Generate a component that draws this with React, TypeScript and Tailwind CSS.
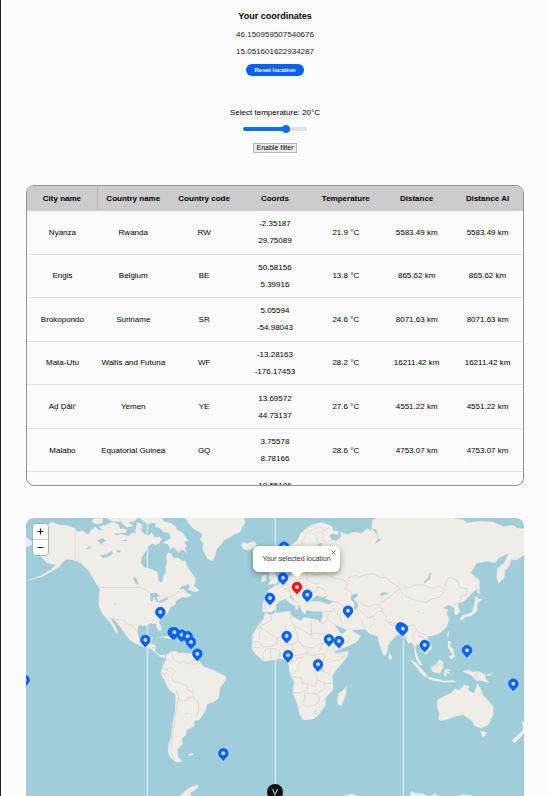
import { useState } from "react";

type City = {
  name: string;
  country: string;
  code: string;
  coords: [string, string];
  temperature: string;
  distance: string;
};

const cities: City[] = [
  { name: "Nyanza", country: "Rwanda", code: "RW", coords: ["-2.35187", "29.75089"], temperature: "21.9 °C", distance: "5583.49 km" },
  { name: "Engis", country: "Belgium", code: "BE", coords: ["50.58156", "5.39916"], temperature: "13.8 °C", distance: "865.62 km" },
  { name: "Brokopondo", country: "Suriname", code: "SR", coords: ["5.05594", "-54.98043"], temperature: "24.6 °C", distance: "8071.63 km" },
  { name: "Mata-Utu", country: "Wallis and Futuna", code: "WF", coords: ["-13.28163", "-176.17453"], temperature: "28.2 °C", distance: "16211.42 km" },
  { name: "Aḑ Ḑāli‘", country: "Yemen", code: "YE", coords: ["13.69572", "44.73137"], temperature: "27.6 °C", distance: "4551.22 km" },
  { name: "Malabo", country: "Equatorial Guinea", code: "GQ", coords: ["3.75578", "8.78166"], temperature: "28.6 °C", distance: "4753.07 km" },
  { name: "", country: "", code: "", coords: ["19.55186", ""], temperature: "", distance: "" },
];

const columns = ["City name", "Country name", "Country code", "Coords", "Temperature", "Distance", "Distance AI"];

const pins: [number, number][] = [
  [792, 110], [789, 203], [750, 264], [862, 254], [984, 302], [800, 378], [804, 436], [927, 388], [957, 393],
  [421, 306], [376, 390], [458, 367], [463, 367], [485, 374], [503, 379], [513, 396], [532, 431],
  [1142, 352], [1149, 356], [1214, 405], [1341, 421], [1480, 521], [894, 463], [610, 730], [14, 510],
];

const land = [
  // North and Central America
  "M85 45 95 35 103 40 120 45 140 46 165 55 172 66 185 62 205 74 212 62 225 50 240 62 252 57 262 64 280 65 290 78 300 72 325 78 338 68 345 72 350 45 362 58 370 70 385 78 395 68 405 85 420 80 425 90 415 100 398 98 385 110 380 120 365 140 362 160 375 174 395 178 412 187 416 213 422 218 429 213 430 198 438 187 437 170 442 155 438 140 445 128 455 133 460 145 475 143 485 153 495 152 500 166 512 185 527 207 526 218 505 224 485 228 476 240 492 236 500 248 515 256 502 262 485 262 468 273 465 284 450 292 444 308 425 322 416 335 425 358 420 364 412 356 408 342 390 339 378 347 355 345 352 365 357 386 372 395 383 388 398 383 392 400 408 408 405 425 420 435 436 436 434 444 420 440 408 430 395 418 375 412 350 402 330 390 318 375 300 350 285 330 272 324 280 340 290 358 295 374 285 364 276 345 266 332 250 315 240 298 236 280 237 260 240 238 225 215 215 198 205 180 195 172 180 158 160 150 140 148 128 156 118 170 95 184 70 198 22 212 60 198 92 180 108 164 80 158 72 148 58 136 65 120 58 100 62 80Z",
  "M18 82 36 95 34 106 18 112Z",
  // Arctic islands
  "M225 24 250 26 245 40 228 42 215 34ZM238 50 260 44 278 36 296 44 300 56 320 58 318 68 290 70 270 64 250 62ZM262 24H295L310 32 292 36 272 32ZM300 24H352L344 34 325 36 340 48 322 52 308 42ZM350 36 368 44 366 56 352 50ZM362 24H392L400 36 385 42 368 34Z",
  "M388 24H425L432 35 450 38 468 50 472 62 486 66 505 92 492 96 500 108 494 114 500 128 484 118 476 128 462 112 450 118 444 102 428 98 440 92 454 84 446 68 430 66 420 55 405 50 410 40 395 38ZM395 85 410 82 420 98 406 106 396 98Z",
  "M514 206 526 218 520 228 538 240 528 246 506 240Z",
  // Greenland
  "M496 24H672L675 38 668 50 660 66 640 74 630 82 615 88 602 104 590 118 586 136 578 153 562 146 554 130 548 118 550 100 541 88 548 74 538 66 520 56 508 42Z",
  // Iceland, Britain, Ireland
  "M663 104 672 96 680 101 702 94 710 103 704 112 686 121 670 118ZM746 165 758 168 757 180 767 196 776 208 770 220 744 224 752 212 746 200 750 190 740 178ZM726 196 740 194 738 212 724 216Z",
  // Europe and Asia
  "M822 185 818 170 812 160 808 110 820 100 832 92 842 70 858 56 875 44 902 38 920 42 936 50 940 62 955 64 953 74 935 70 928 78 935 90 950 92 964 80 960 66 984 74 1000 66 1024 70 1042 56 1054 62 1058 30 1068 24 1300 24 1330 30 1340 38 1380 34 1420 36 1450 50 1480 46 1490 54 1512 56 1512 134 1490 150 1474 148 1465 172 1455 180 1452 204 1436 220 1430 202 1432 176 1452 160 1466 130 1448 138 1436 144 1426 158 1400 154 1370 160 1352 188 1362 196 1372 212 1370 236 1350 256 1330 275 1312 280 1320 304 1308 316 1302 306 1304 294 1286 285 1268 294 1284 300 1280 312 1288 328 1280 350 1262 368 1236 378 1222 378 1224 394 1236 414 1216 434 1204 418 1194 402 1186 406 1188 426 1196 446 1207 466 1198 464 1186 440 1182 408 1172 396 1166 402 1156 380 1148 368 1130 376 1112 394 1104 406 1102 428 1092 438 1080 408 1072 378 1050 372 1036 358 980 360 950 346 940 340 964 372 976 366 986 356 1002 366 1022 378 1010 396 980 410 938 426 926 404 908 370 900 344 908 316 906 304 880 304 850 299 844 286 856 277 896 274 928 284 940 274 915 266 924 256 906 262 890 256 870 274 866 286 850 288 858 300 856 314 846 304 836 280 820 266 812 254 808 262 824 272 842 286 834 286 834 300 826 296 826 288 808 278 796 266 778 274 768 286 768 296 752 306 728 306 728 284 732 270 754 266 760 252 742 244 758 232 778 222 790 208 810 200Z",
  // Africa
  "M735 310 752 314 775 308 810 304 814 318 842 332 852 322 895 330 904 350 920 378 934 410 945 430 985 424 982 438 968 458 950 478 936 500 940 538 914 566 917 585 898 612 882 626 850 630 840 616 832 580 818 550 823 516 810 492 804 452 780 446 732 454 708 434 696 416 696 398 698 374 716 344 730 328Z",
  "M980 528 978 550 965 586 954 584 952 570 956 550 970 540Z",
  // South America
  "M438 448 438 436 455 425 470 423 476 430 490 428 520 432 535 450 552 470 584 482 615 498 618 508 600 534 596 564 580 576 562 582 556 604 538 630 522 632 523 648 500 660 498 674 485 686 488 702 472 718 474 738 486 756 466 756 452 742 444 726 446 704 454 680 458 640 466 602 467 554 445 536 432 508 422 492 428 470Z",
  "M418 382 440 378 462 386 450 388 430 382ZM506 733 520 730 518 735 507 736Z",
  // Asian islands
  "M1365 258 1376 266 1386 268 1372 280 1371 302 1354 318 1338 320 1324 332 1320 326 1328 316 1342 312 1356 306 1362 288 1366 272ZM1370 200 1378 212 1378 240 1380 252 1372 248ZM1281 374 1288 362 1284 382ZM1284 394 1292 394 1290 410 1300 416 1304 440 1294 446 1286 440 1298 434 1284 414ZM1108 428 1116 440 1112 450 1106 444Z",
  "M1172 450 1188 458 1204 476 1220 494 1216 502 1204 490 1184 466ZM1218 500 1240 504 1270 512 1300 511 1306 516 1270 517 1230 509ZM1232 470 1248 464 1258 450 1268 454 1270 470 1260 490 1238 486ZM1276 478 1290 480 1282 484 1292 492 1280 488 1278 500 1272 496ZM1328 484 1346 480 1358 486 1376 484 1396 494 1396 506 1408 518 1384 512 1368 512 1354 496ZM1400 494 1420 490 1404 498Z",
  // Australia, Tasmania and New Zealand
  "M1252 570 1270 560 1295 548 1305 536 1318 542 1332 525 1348 528 1344 540 1362 550 1372 522 1380 532 1388 554 1400 566 1420 590 1420 612 1404 646 1384 654 1364 648 1358 634 1344 624 1330 614 1302 620 1282 628 1262 632 1256 628 1258 610 1252 590ZM1382 664 1400 666 1396 678 1386 680ZM1505 634 1512 638V668L1500 684 1484 699 1476 692 1490 678 1506 664 1510 654Z",
  // Antarctica
  "M482 858 494 844 510 832 534 824 532 834 510 850 514 858ZM974 858 995 851 1012 858ZM1170 858 1174 844 1186 850 1215 852 1222 858ZM1234 856 1245 851 1256 858ZM1318 858 1330 853 1360 858Z",
];

const water =
  "M866 168 878 158 884 126 895 102 908 98 904 108 890 128 892 148 920 148 894 156 884 178 862 188 846 184ZM994 256 1010 248 1014 258 1002 266 1014 284 1012 298 1000 296 1004 280 992 268ZM1052 54 1070 60 1072 84 1084 90 1064 102 1076 84 1062 62ZM1210 216 1222 206 1230 188 1234 190 1230 206 1216 218ZM1080 252 1092 246 1106 250 1092 254 1084 258ZM232 92 250 84 258 92 246 98 248 106ZM240 136 258 134 275 124 280 130 262 140 248 144ZM286 120 304 122 296 128ZM338 200 348 204 356 224 346 220ZM390 250 408 248 420 258 410 262 416 276 408 274 402 260 396 276 392 272ZM412 276 432 268 440 262 444 268 424 278ZM902 474 912 476 906 484 900 480ZM196 116 212 108 210 116ZM282 278 288 282 284 284ZM300 92 322 88 318 94ZM496 610 504 608 502 612ZM1190 304 1198 302 1194 306Z";

const borders =
  "M165 55V148L180 156 192 172 205 184 212 198M240 232H360L380 240 392 250M412 276 430 268 444 262 452 260 464 256 472 244 480 246M268 325 290 328 310 330 322 344 336 346 350 362M376 404 386 410 390 400M396 414 408 412M455 430 460 448 476 458 490 454 505 460 520 452 525 434M428 474 440 480 450 470 466 486 455 500 462 516 484 518 500 528 502 540 518 546 522 566 536 578 536 600 530 618M467 540 476 560 470 590 466 620 462 650 456 690 454 730 464 748M476 572 500 572 506 560 520 562M422 492 436 492 444 476M536 448 530 462 512 462M548 452 544 464" +
  "M832 160 838 130 846 96 864 66 888 54 904 52 912 62 924 54M904 60 912 88 914 102M888 76 894 98M920 110 918 146 924 160 936 170 940 190 930 196 944 206 972 210 984 220 974 236M870 190 890 196 912 190 926 196M864 190 860 206 872 218 894 222 902 214M802 206 800 222 812 234 830 236 850 230 864 224M778 226 790 234 804 242 816 242M736 272 736 300M756 266 776 276M850 230 852 244 870 248 886 246 892 230 912 238 918 252M846 262 862 270 880 266M940 274 960 280 980 296M936 282 944 304 958 320 966 340M908 306 930 304 944 306M930 304 920 324 940 344M904 344 920 330M982 376 990 388 970 400 942 408M974 236 988 240 996 252M990 216 984 204 1006 196 1020 202 1030 196 1062 190 1080 204 1098 202 1112 216 1134 230 1140 236 1124 246 1110 262 1094 270 1082 284 1066 282 1050 290 1032 286 1010 268M1140 236 1166 234 1178 226 1208 224 1232 234 1260 230 1276 240 1258 262 1236 266 1218 278 1196 274 1174 266 1150 256ZM1276 232 1280 210 1290 202 1312 212 1320 232 1342 236 1338 256 1322 258 1324 268M1308 284 1320 270M1014 296 1030 312 1044 324 1060 318 1074 304 1088 306 1086 294 1070 290M1024 326 1028 348 1036 358M1060 318 1064 336 1046 356M1088 306 1098 318 1096 332 1118 346 1138 348M1104 336 1126 340 1140 344M1152 342 1152 356 1168 348 1180 344 1190 360 1176 376 1184 394M1192 364 1206 372 1220 374M1194 378 1210 382 1218 394M1202 400 1216 400M1234 472 1254 466 1268 452M1368 486V512" +
  "M752 314 754 330 718 350M718 350 772 384 800 376 826 360 820 342 810 330 814 318M826 350 880 378M874 330V370H920M872 370V386M772 384 770 404 742 410 726 410 716 394 698 396M698 412H716M718 350V390M732 454 728 434 736 418 752 416 768 416 780 426 778 446M752 416 752 448M766 420 768 446M780 408 820 404 834 392 830 366M820 404 818 430 804 440M834 392 850 410 880 414 894 402 914 398M820 438 850 430 880 436 914 430M860 430 858 412M896 426 910 398 928 402 938 412 948 426 976 436 958 450 936 452M914 430 912 452 906 470M806 454 826 454 832 444 850 440M812 496 832 480 840 456M818 500 846 504 848 522 862 520 862 540 840 548 818 548M862 520 884 530 892 510 888 484 898 460M892 510 914 520 936 520M912 520 914 536 890 552 870 550 854 550 852 580 840 594M884 550 900 564 892 582 868 590 852 588M890 600 880 612 M934 500 920 488 902 482M886 602 892 608 884 612Z";

function Pin({ x, y, color }: { x: number; y: number; color: string }) {
  return (
    <g transform={`translate(${x} ${y})`}>
      <path d="M0 22C-5 15-15 10-15 0A15 15 0 0 1 15 0C15 10 5 15 0 22Z" fill={color} stroke={color} strokeWidth="1" />
      <circle r="6" fill="#c3d9ea" />
    </g>
  );
}

function WorldMap() {
  return (
    <section aria-label="Map" className="relative h-[278px] w-full overflow-hidden rounded-t-lg bg-[#9fcdd9]">
      <svg viewBox="18 24 1494 834" preserveAspectRatio="xMidYMin slice" className="block size-full">
        <path d={land.join("")} fill="#f0ede6" stroke="#f0ede6" strokeWidth="1" strokeLinejoin="round" />
        <path d={water} fill="#9fcdd9" />
        <path d={borders} fill="none" stroke="#d8c9cf" strokeWidth="2" strokeLinejoin="round" />
        <path d="M382 24V858M766 24V858M1150 24V858" stroke="#e3f1f4" strokeWidth="3" />
        {pins.map(([x, y]) => (
          <Pin key={`${x}-${y}`} x={x} y={y} color="#0561fc" />
        ))}
        <Pin x={831} y={231} color="#fb1017" />
      </svg>

      <div className="absolute top-[5px] left-[6px] flex flex-col overflow-hidden rounded-sm border border-[#a4b6b9] bg-white">
        <button aria-label="Zoom in" className="flex h-[16px] w-[15px] items-center justify-center border-b border-[#ccc]">
          <svg viewBox="0 0 9 9" className="size-[9px]">
            <path d="M4.5 1.5v6M1.5 4.5h6" stroke="#222" strokeWidth="1.2" />
          </svg>
        </button>
        <button aria-label="Zoom out" className="flex size-[15px] items-center justify-center">
          <svg viewBox="0 0 9 9" className="size-[9px]">
            <path d="M1.5 4.5h6" stroke="#222" strokeWidth="1.2" />
          </svg>
        </button>
      </div>

      <div className="absolute top-[28px] left-[227px] flex h-[26px] w-[87px] items-center justify-center rounded-md bg-white shadow-[0_2px_6px_rgba(0,0,0,0.4)]">
        <span className="text-[7px] leading-[10px] text-[#333]">Your selected location</span>
        <button aria-label="Close popup" className="absolute top-[4px] right-[4px]">
          <svg viewBox="0 0 5 5" className="size-[5px]">
            <path d="M.5.5l4 4M4.5.5l-4 4" stroke="#555" strokeWidth=".8" />
          </svg>
        </button>
        <svg viewBox="0 0 12 6" className="absolute top-full left-[38px] h-[6px] w-[12px]">
          <path d="M0 0H12L6 6Z" fill="#fff" />
        </svg>
      </div>
    </section>
  );
}

export default function App() {
  const [temperature, setTemperature] = useState(20);
  return (
    <div className="overflow-hidden border-l border-[#222] bg-[#fcfcfc] font-['Liberation_Sans',Arial,sans-serif] text-[8px] leading-[17px] text-black">
      <main className="flex flex-col items-center px-[25px] pt-2">
        <h1 className="mb-px text-[9px] font-bold">Your coordinates</h1>
        <p className="text-[#222]">46.150959507540676</p>
        <p className="text-[#222]">15.051601622934287</p>
        <button className="mt-1 h-[12px] rounded-full bg-[#0561fc] px-2 text-[6px] leading-[12px] font-bold text-white">
          Reset location
        </button>

        <label htmlFor="temperature" className="mt-7">
          Select temperature: {temperature}°C
        </label>
        <input
          id="temperature"
          type="range"
          min={-10}
          max={33}
          value={temperature}
          onChange={(event) => setTemperature(Number(event.target.value))}
          className="mt-1 block h-[8px] w-[64px] appearance-none bg-transparent [&::-webkit-slider-runnable-track]:h-[4px] [&::-webkit-slider-runnable-track]:rounded-full [&::-webkit-slider-runnable-track]:bg-[linear-gradient(to_right,#0571fb_67%,#e3e3e3_67%)] [&::-webkit-slider-thumb]:-mt-[2px] [&::-webkit-slider-thumb]:size-[8px] [&::-webkit-slider-thumb]:appearance-none [&::-webkit-slider-thumb]:rounded-full [&::-webkit-slider-thumb]:bg-[#0571fb]"
        />
        <button className="mt-[10px] h-[10px] border border-[#b5b5b5] bg-[#ededed] px-[3px] text-[7px] leading-[8px]">
          Enable filter
        </button>

        <div className="mt-8 h-[301px] w-full overflow-hidden rounded-lg border border-[#929292]">
          <table className="h-[330px] w-full table-fixed border-separate border-spacing-0 text-center">
            <thead>
              <tr>
                {columns.map((column) => (
                  <th
                    key={column}
                    className="h-[25px] border-b border-[#e6c6ca] bg-[#cccccc] p-0 font-bold first:border-r first:border-r-[#cfaeb1]"
                  >
                    {column}
                  </th>
                ))}
              </tr>
            </thead>
            <tbody>
              {cities.map((city) => (
                <tr key={city.coords[0]} className="*:border-b *:border-[#e3e3e3] *:p-0">
                  <td>{city.name}</td>
                  <td>{city.country}</td>
                  <td>{city.code}</td>
                  <td>
                    <p className="h-[17px]">{city.coords[0]}</p>
                    <p className="h-[17px]">{city.coords[1]}</p>
                  </td>
                  <td>{city.temperature}</td>
                  <td>{city.distance}</td>
                  <td>{city.distance}</td>
                </tr>
              ))}
            </tbody>
          </table>
        </div>

        <div className="mt-8 w-full">
          <WorldMap />
        </div>
      </main>

      <button
        aria-label="Open toolbar"
        className="fixed -bottom-[4px] left-1/2 flex size-[16px] -translate-x-1/2 items-center justify-center rounded-full bg-[#111] shadow"
      >
        <svg viewBox="0 0 8 8" className="size-[8px]">
          <path d="M1.5 1L4 6.5L6.5 1" fill="none" stroke="#aaa" strokeWidth="1.3" />
        </svg>
      </button>
    </div>
  );
}
